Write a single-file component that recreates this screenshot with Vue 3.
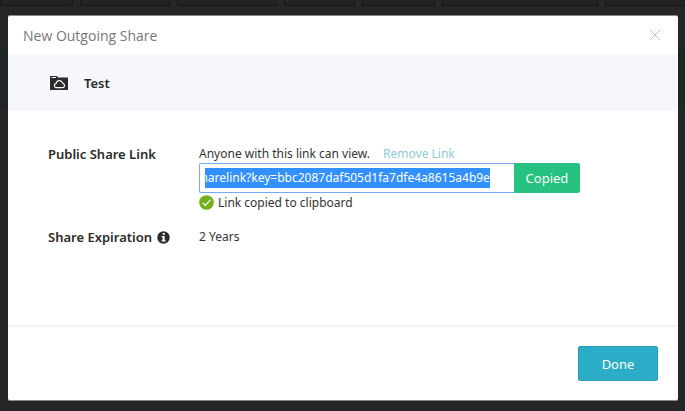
<script setup>
import { onMounted, ref } from 'vue'

const shareLink = ref('https://files/sharelink?key=bbc2087daf505d1fa7dfe4a8615a4b9e')
const linkInput = ref(null)
const tabs = [73, 90, 100, 71, 73, 156, 100]

function selectLink() {
  const el = linkInput.value
  el.focus({ preventScroll: true })
  el.select()
  el.scrollLeft = el.scrollWidth
}

onMounted(selectLink)
</script>

<template>
  <div class="page">
    <div class="tabs" aria-hidden="true">
      <span v-for="(w, i) in tabs" :key="i" class="tab" :style="{ width: w + 'px' }"></span>
    </div>
    <section class="dialog" role="dialog" aria-labelledby="dialog-title">
      <header class="head">
        <h1 id="dialog-title" class="title">New Outgoing Share</h1>
        <button class="close" type="button" aria-label="Close">
          <svg width="12" height="12" viewBox="0 0 12 12"><path d="M1 1l10 10M11 1L1 11" stroke="#bcbcbc" stroke-width="1" fill="none" /></svg>
        </button>
      </header>
      <div class="item">
        <svg width="18" height="14" viewBox="0 0 18 14">
          <path d="M0 0h7l1 1.500H18V14H0z" fill="#2b2b2b" />
          <path d="M1.500 1.500h4.500" stroke="#f5f7fa" stroke-width="1" />
          <path d="M6 11.700h6.500a2.100 2.100 0 0 0 .6-4.100 1.600 1.600 0 0 0-1-1.200 3.100 3.100 0 0 0-5.900 1A2.200 2.200 0 0 0 6 11.700z" fill="none" stroke="#f5f7fa" stroke-width="1.200" />
        </svg>
        <strong>Test</strong>
      </div>
      <div class="body">
        <label class="label" for="share-link">Public Share Link</label>
        <div class="link">
          <p class="hint">Anyone with this link can view. <a class="remove" href="#">Remove Link</a></p>
          <div class="group">
            <input id="share-link" ref="linkInput" class="url" type="text" readonly :value="shareLink" />
            <button class="copied" type="button" @click="selectLink">Copied</button>
          </div>
          <p class="status">
            <svg width="15" height="15" viewBox="0 0 15 15"><circle cx="7.500" cy="7.500" r="7.300" fill="#72b01d" /><path d="M3.700 7.800l2.600 2.600 5-5.600" fill="none" stroke="#fff" stroke-width="1.200" /></svg>
            Link copied to clipboard
          </p>
        </div>
        <div class="label">
          Share Expiration
          <svg width="13" height="13" viewBox="0 0 13 13"><circle cx="6.500" cy="6.500" r="6.200" fill="#2b2b2b" /><path d="M5.700 2h2.100v1.700H5.700zM4.600 5h3.100v4.200h1V10.500H4.500V9.200h1V6.300h-.9z" fill="#fff" /></svg>
        </div>
        <div class="value">2 Years</div>
      </div>
      <footer class="foot">
        <button class="done" type="button">Done</button>
      </footer>
    </section>
  </div>
</template>

<style>
body {
  background: #262626;
}
</style>

<style scoped>
.page {
  box-sizing: border-box;
  min-height: 100vh;
  padding: 0 7px 10px 0;
  overflow: hidden;
  background: linear-gradient(#262626 47px, #1f2424 47px, #1f2424 107px, #262626 107px);
  font: 12px/20px "Segoe UI", "Noto Sans", sans-serif;
  color: #333;
}
.tabs {
  display: flex;
  gap: 7px;
  height: 6px;
  margin-bottom: 9px;
  margin-right: -7px;
  overflow: hidden;
}
.tab {
  box-sizing: border-box;
  flex: none;
  border: 1px solid #171717;
  border-top: 0;
  border-radius: 0 0 3px 3px;
  background: #232323;
}
.dialog {
  box-sizing: border-box;
  margin-left: 8px;
  border: solid #8b8889;
  border-width: 1px 0;
  border-radius: 2px;
  background: #fff;
}
p, h1 {
  margin: 0;
}
button {
  font: inherit;
  cursor: pointer;
}
.head {
  display: flex;
  align-items: center;
  justify-content: space-between;
  height: 38px;
  padding: 0 17px 0 15px;
}
.title {
  padding-top: 2px;
  font-family: "Segoe UI", "Open Sans", sans-serif;
  font-size: 14px;
  font-weight: 400;
  color: #777;
}
.close {
  display: flex;
  padding: 0;
  border: 0;
  background: none;
}
.item {
  display: flex;
  align-items: center;
  gap: 16px;
  height: 57px;
  padding-left: 42px;
  background: #f5f7fa;
}
.item strong, .label {
  font-size: 13px;
  font-weight: 600;
  color: #2b2b2b;
}
.body {
  display: grid;
  grid-template-columns: 151px 1fr;
  row-gap: 15px;
  padding: 33px 98px 78px 40px;
}
.label {
  display: flex;
  align-items: center;
  align-self: start;
  gap: 5px;
}
.link {
  min-width: 0;
}
.hint {
  height: 19px;
}
.remove {
  margin-left: 10px;
  color: #8ccbd9;
  text-decoration: none;
}
.group {
  display: flex;
  height: 30px;
}
.url {
  box-sizing: border-box;
  flex: 1;
  min-width: 0;
  padding: 0 24px 0 5px;
  border: 1px solid #76a7fa;
  border-right: 0;
  border-radius: 2px 0 0 2px;
  outline: 0;
  background: #fff;
  font: inherit;
  color: #333;
}
.url::selection {
  background: #3390ff;
  color: #fff;
}
.copied {
  width: 66px;
  padding: 0;
  border: 0;
  border-radius: 0 2px 2px 0;
  background: #27c281;
  color: #fff;
  font-size: 13px;
}
.status {
  display: flex;
  align-items: center;
  gap: 4px;
  height: 19px;
}
.foot {
  display: flex;
  justify-content: flex-end;
  padding: 19px 20px;
  border-top: 2px solid #f4f4f4;
}
.done {
  width: 80px;
  height: 35px;
  padding: 0;
  border: 1px solid #29a0b8;
  border-radius: 2px;
  background: #2badc7;
  color: #fff;
  font-size: 13px;
}
</style>
